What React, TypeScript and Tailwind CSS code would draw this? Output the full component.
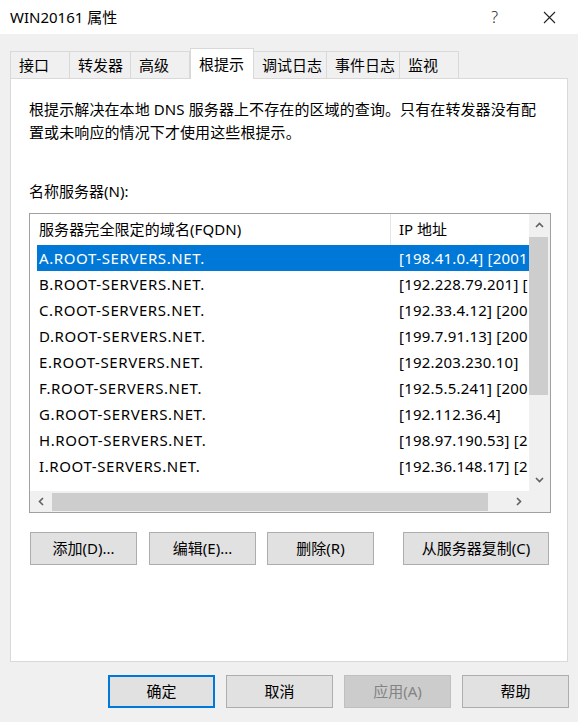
import React from "react";

const tabs = [
  { label: "接口", w: "w-[60px]" },
  { label: "转发器", w: "w-[61px]" },
  { label: "高级", w: "w-[59px]" },
  { label: "根提示", w: "w-[64px]", active: true },
  { label: "调试日志", w: "w-[73px]" },
  { label: "事件日志", w: "w-[73px]" },
  { label: "监视", w: "w-[59px]" },
];

const servers = [
  ["A.ROOT-SERVERS.NET.", "[198.41.0.4] [2001"],
  ["B.ROOT-SERVERS.NET.", "[192.228.79.201] ["],
  ["C.ROOT-SERVERS.NET.", "[192.33.4.12] [200"],
  ["D.ROOT-SERVERS.NET.", "[199.7.91.13] [200"],
  ["E.ROOT-SERVERS.NET.", "[192.203.230.10]"],
  ["F.ROOT-SERVERS.NET.", "[192.5.5.241] [200"],
  ["G.ROOT-SERVERS.NET.", "[192.112.36.4]"],
  ["H.ROOT-SERVERS.NET.", "[198.97.190.53] [2"],
  ["I.ROOT-SERVERS.NET.", "[192.36.148.17] [2"],
];

function Chevron(props: { dir: "up" | "down" | "left" | "right" }) {
  const d = {
    up: "M2 7 L5.5 3.5 L9 7",
    down: "M2 4 L5.5 7.5 L9 4",
    left: "M7 2 L3.5 5.5 L7 9",
    right: "M4 2 L7.5 5.5 L4 9",
  }[props.dir];
  return (
    <svg width="11" height="11" viewBox="0 0 11 11">
      <path d={d} fill="none" stroke="#606060" strokeWidth="1.6" />
    </svg>
  );
}

function Btn(props: { label: string; w?: string; kind?: "default" | "disabled" }) {
  const base = "h-[33px] flex items-center justify-center text-[15px]";
  let cls = "bg-[#e1e1e1] border border-[#adadad] text-black";
  if (props.kind === "default") cls = "bg-[#e1e1e1] border-2 border-[#0078d7] text-black";
  if (props.kind === "disabled") cls = "bg-[#cccccc] border border-[#bfbfbf] text-[#838383]";
  return <div className={`${base} ${cls} ${props.w ?? "w-[107px]"}`}>{props.label}</div>;
}

export default function App() {
  return (
    <div className="w-[578px] h-[722px] bg-[#f0f0f0] overflow-hidden font-['Noto_Sans','Noto_Sans_CJK_SC',sans-serif] text-black">
      {/* title bar */}
      <div className="h-[34px] bg-white flex items-center pl-[10px] text-[15px]">
        <span>WIN20161 属性</span>
        <span className="ml-auto mr-[45px] text-[16px] font-light text-[#222]">?</span>
        <svg width="13" height="13" viewBox="0 0 13 13" className="mr-[22px]">
          <path d="M1 1 L12 12 M12 1 L1 12" stroke="#222" strokeWidth="1.1" />
        </svg>
      </div>

      {/* tabs */}
      <div className="pt-[13px] pl-[10px] flex items-end h-[44px] relative z-10">
        {tabs.map((t) =>
          t.active ? (
            <div
              key={t.label}
              className={`${t.w} h-[31px] bg-white border border-b-0 border-[#d9d9d9] flex items-center pl-[8px] text-[15px] -mb-[1px]`}
            >
              {t.label}
            </div>
          ) : (
            <div
              key={t.label}
              className={`${t.w} h-[27px] bg-[#f0f0f0] border border-b-0 border-l-0 first:border-l border-[#d9d9d9] flex items-center pl-[8px] text-[15px]`}
            >
              {t.label}
            </div>
          )
        )}
      </div>

      {/* panel */}
      <div className="ml-[10px] w-[558px] h-[584px] bg-white border border-[#d9d9d9] pl-[18px] pt-[19px]">
        <p className="text-[15px] leading-[23px] tracking-[0.1px]">
          根提示解决在本地 DNS 服务器上不存在的区域的查询。只有在转发器没有配
          <br />
          置或未响应的情况下才使用这些根提示。
        </p>

        <p className="mt-[36px] text-[15px] leading-[23px]">名称服务器(N):</p>

        {/* list box */}
        <div className="mt-[10px] w-[522px] h-[300px] border border-[#a0a0a0] grid grid-cols-[1fr_21px] grid-rows-[1fr_21px] overflow-hidden">
          <div className="overflow-hidden text-[15px]">
            <div className="h-[31px] flex items-center">
              <div className="w-[360px] pl-[9px] h-full flex items-center tracking-[0.1px]">服务器完全限定的域名(FQDN)</div>
              <div className="flex-1 h-full border-l border-[#e5e5e5] pl-[8px] flex items-center">IP 地址</div>
            </div>
            {servers.map(([name, ip], i) => (
              <div
                key={name}
                className={`h-[26px] ml-[7px] flex items-center whitespace-nowrap tracking-[0.6px] ${
                  i === 0 ? "bg-[#0078d7] text-white" : ""
                }`}
              >
                <div className="w-[353px] pl-[2px]">{name}</div>
                <div className="flex-1 pl-[9px] overflow-hidden tracking-[0.2px]">{ip}</div>
              </div>
            ))}
          </div>

          {/* vertical scrollbar */}
          <div className="bg-[#f0f0f0] flex flex-col">
            <div className="h-[23px] flex items-center justify-center">
              <Chevron dir="up" />
            </div>
            <div className="h-[158px] bg-[#cdcdcd] mr-[2px]" />
            <div className="flex-1" />
            <div className="h-[23px] flex items-center justify-center">
              <Chevron dir="down" />
            </div>
          </div>

          {/* horizontal scrollbar */}
          <div className="bg-[#f0f0f0] flex items-center">
            <div className="w-[22px] flex justify-center">
              <Chevron dir="left" />
            </div>
            <div className="w-[436px] h-[18px] bg-[#cdcdcd]" />
            <div className="flex-1" />
            <div className="w-[21px] flex justify-center">
              <Chevron dir="right" />
            </div>
          </div>
          <div className="bg-[#f0f0f0]" />
        </div>

        {/* list actions */}
        <div className="mt-[19px] ml-[1px] flex">
          <Btn label="添加(D)..." />
          <div className="ml-[12px]">
            <Btn label="编辑(E)..." />
          </div>
          <div className="ml-[11px]">
            <Btn label="删除(R)" />
          </div>
          <div className="ml-[29px]">
            <Btn label="从服务器复制(C)" w="w-[146px]" />
          </div>
        </div>
      </div>

      {/* dialog buttons */}
      <div className="mt-[13px] pl-[108px] flex gap-[11px]">
        <Btn label="确定" kind="default" />
        <Btn label="取消" />
        <Btn label="应用(A)" kind="disabled" />
        <Btn label="帮助" />
      </div>
    </div>
  );
}
